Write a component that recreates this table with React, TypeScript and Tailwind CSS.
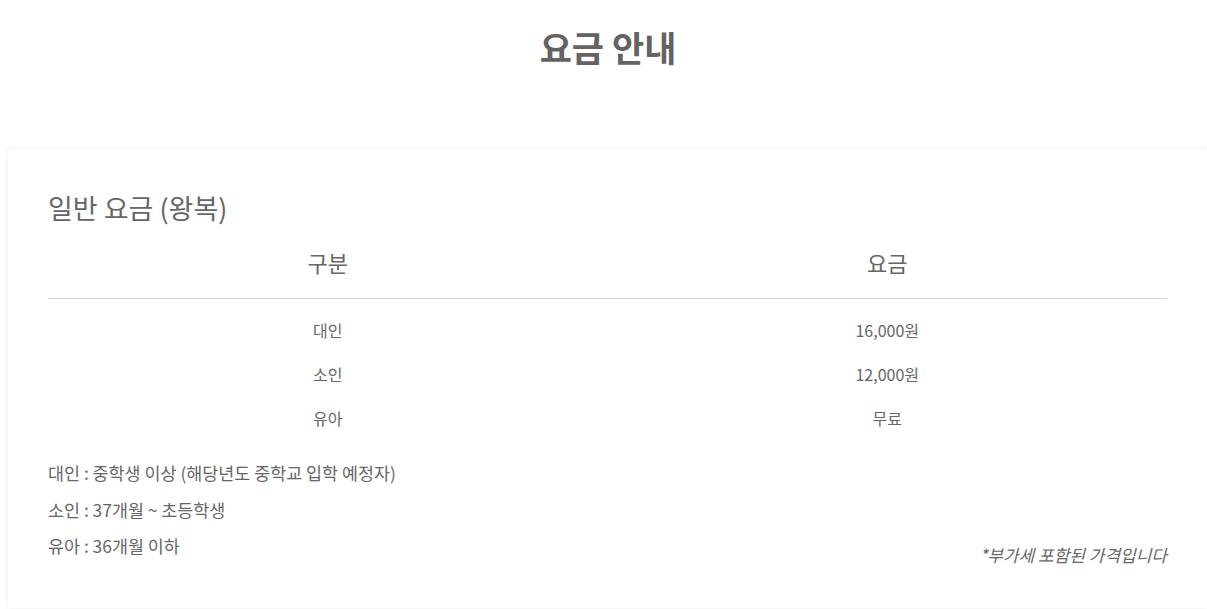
import React from "react";

const rows = [
  { label: "대인", price: "16,000원" },
  { label: "소인", price: "12,000원" },
  { label: "유아", price: "무료" },
];

const notes = [
  "대인 : 중학생 이상 (해당년도 중학교 입학 예정자)",
  "소인 : 37개월 ~ 초등학생",
  "유아 : 36개월 이하",
];

export default function App() {
  return (
    <div
      className="min-h-screen bg-white text-[#666]"
      style={{ fontFamily: '"Noto Sans CJK KR", "Noto Sans", sans-serif' }}
    >
      <h1 className="pt-[23px] pl-[9px] text-center text-[35px] font-bold leading-[48px] text-[#636363]">
        요금 안내
      </h1>

      <div className="ml-2 mt-[79px] bg-white px-10 pt-10 pb-[43px] shadow-[0_0_6px_rgba(0,0,0,0.08)]">
        <h2 className="text-[27px] leading-[36px]">일반 요금 (왕복)</h2>

        <div className="grid h-[73px] grid-cols-2 items-center border-b border-[#d6d6d6] text-center text-[22px]">
          <div>구분</div>
          <div>요금</div>
        </div>

        <div className="pt-[9px]">
          {rows.map((r) => (
            <div
              key={r.label}
              className="grid h-[44px] grid-cols-2 items-center text-center text-[16px]"
            >
              <div>{r.label}</div>
              <div>{r.price}</div>
            </div>
          ))}
        </div>

        <div className="mt-[15px] flex items-end justify-between">
          <div className="text-[17.4px]">
            {notes.map((n) => (
              <p key={n} className="leading-[36.5px]">
                {n}
              </p>
            ))}
          </div>
          <p className="text-[17px] italic leading-[20px]">*부가세 포함된 가격입니다</p>
        </div>
      </div>
    </div>
  );
}
